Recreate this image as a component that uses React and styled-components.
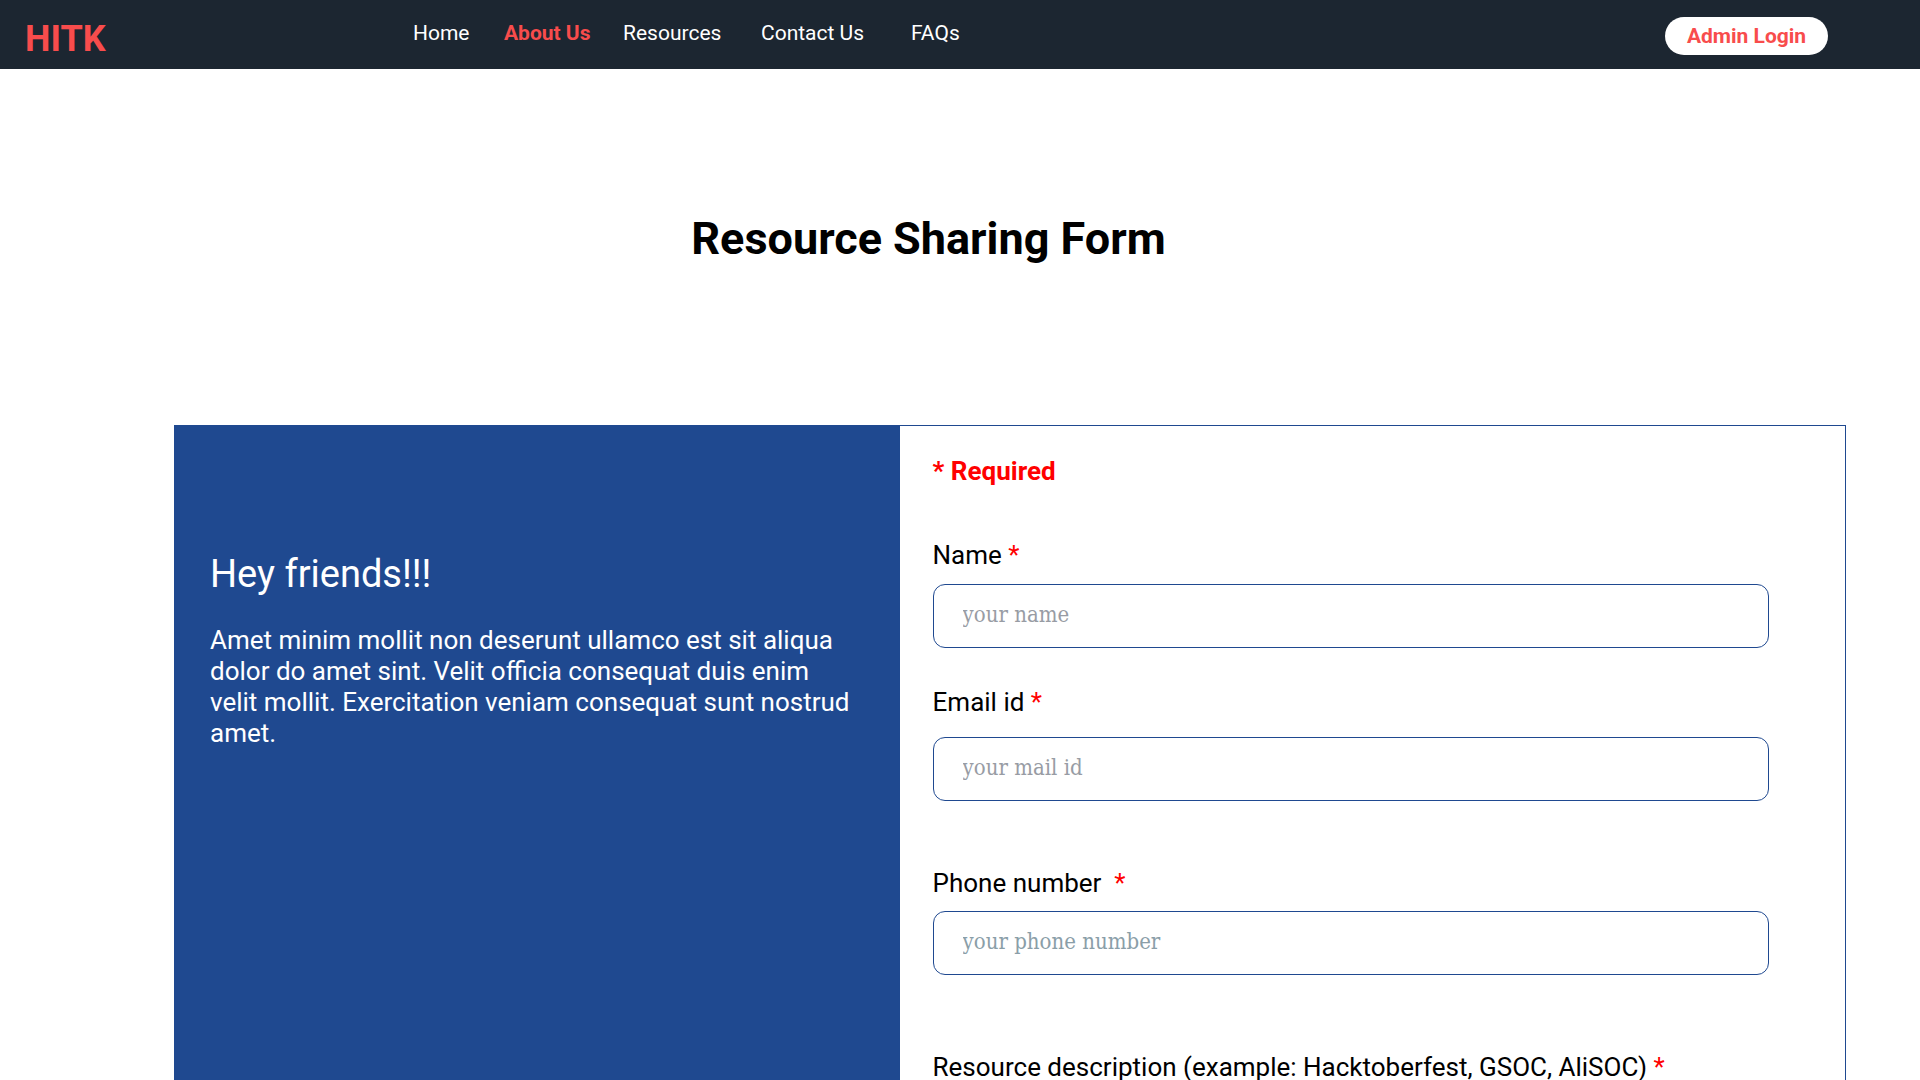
import React from "react";
import styled, { createGlobalStyle } from "styled-components";

const GlobalStyle = createGlobalStyle`
  *, *::before, *::after { box-sizing: border-box; }
  html { scrollbar-width: none; }
  body {
    margin: 0;
    background: #ffffff;
    color: #000000;
    font-family: Roboto, "Liberation Sans", sans-serif;
  }
`;

const Header = styled.header`
  display: flex;
  align-items: flex-start;
  height: 69px;
  padding: 0 92px 0 25px;
  background: #1c2631;
`;

const Logo = styled.a`
  width: 388px;
  padding-top: 18px;
  color: #f84c4c;
  font-size: 36px;
  font-weight: 700;
  line-height: 42px;
  text-decoration: none;
`;

const Nav = styled.nav`
  display: grid;
  grid-template-columns: 91px 119px 138px 150px auto;
  padding-top: 20px;
`;

const NavLink = styled.a`
  color: ${({ $active }) => ($active ? "#f84c4c" : "#ffffff")};
  font-size: 21px;
  font-weight: ${({ $active }) => ($active ? 700 : 400)};
  line-height: 26px;
  text-decoration: none;
  white-space: nowrap;
`;

const LoginButton = styled.button`
  width: 163px;
  height: 38px;
  margin: 17px 0 0 auto;
  padding: 0;
  border: 0;
  border-radius: 19px;
  background: #ffffff;
  color: #f84c4c;
  font: 700 21px/38px Roboto, "Liberation Sans", sans-serif;
  cursor: pointer;
`;

const Title = styled.h1`
  margin: 0;
  padding: 143px 63px 159px 0;
  font-size: 45px;
  font-weight: 700;
  line-height: 54px;
  text-align: center;
`;

const Card = styled.main`
  display: grid;
  grid-template-columns: 726fr 946fr;
  margin: 0 74px 0 174px;
  border: 1px solid #1f4990;
  border-left: 0;
`;

const Intro = styled.section`
  padding: 125px 40px 0 36px;
  background: #1f4990;
  color: #ffffff;
`;

const IntroTitle = styled.h2`
  margin: 0 0 28px;
  font-size: 38px;
  font-weight: 400;
  line-height: 46px;
`;

const IntroText = styled.p`
  margin: 0;
  font-size: 26px;
  line-height: 31px;
`;

const Form = styled.form`
  padding: 30px 76px 60px 33px;
`;

const RequiredNote = styled.p`
  margin: 0 0 53px;
  color: #ff0000;
  font-size: 26px;
  font-weight: 700;
  line-height: 31px;
`;

const Field = styled.div`
  display: flex;
  flex-direction: column;
  gap: ${({ $gap }) => $gap}px;
  margin-bottom: ${({ $after }) => $after}px;
`;

const Label = styled.label`
  font-size: 26px;
  line-height: 31px;
  white-space: pre-wrap;
`;

const Star = styled.span`
  color: #ff0000;
`;

const Input = styled.input`
  width: 100%;
  height: 64px;
  padding: 0 29px 4px;
  border: 1px solid #1f4990;
  border-radius: 12px;
  background: #ffffff;
  color: #000000;
  font-family: "DejaVu Serif Condensed", "DejaVu Serif", serif;
  font-size: 22px;
  outline: none;

  &::placeholder {
    color: ${({ $tone }) => $tone};
    opacity: 1;
  }
`;

const TextArea = styled(Input).attrs({ as: "textarea" })`
  height: 160px;
  padding: 18px 29px;
  resize: vertical;
`;

const links = ["Home", "About Us", "Resources", "Contact Us", "FAQs"];

const fields = [
  { id: "name", label: "Name ", hint: "your name", type: "text", gap: 13, after: 39, tone: "#989ca4" },
  { id: "email", label: "Email id ", hint: "your mail id", type: "email", gap: 19, after: 67, tone: "#989ca4" },
  { id: "phone", label: "Phone number  ", hint: "your phone number", type: "tel", gap: 12, after: 77, tone: "#8a9ea8" },
];

export default function App() {
  return (
    <>
      <GlobalStyle />
      <Header>
        <Logo href="#home">HITK</Logo>
        <Nav>
          {links.map((text) => (
            <NavLink key={text} href="#" $active={text === "About Us"}>
              {text}
            </NavLink>
          ))}
        </Nav>
        <LoginButton type="button">Admin Login</LoginButton>
      </Header>
      <Title>Resource Sharing Form</Title>
      <Card>
        <Intro>
          <IntroTitle>Hey friends!!!</IntroTitle>
          <IntroText>
            Amet minim mollit non deserunt ullamco est sit aliqua dolor do amet sint. Velit officia
            consequat duis enim velit mollit. Exercitation veniam consequat sunt nostrud amet.
          </IntroText>
        </Intro>
        <Form>
          <RequiredNote>* Required</RequiredNote>
          {fields.map((f) => (
            <Field key={f.id} $gap={f.gap} $after={f.after}>
              <Label htmlFor={f.id}>
                {f.label}
                <Star>*</Star>
              </Label>
              <Input id={f.id} type={f.type} placeholder={f.hint} $tone={f.tone} />
            </Field>
          ))}
          <Field $gap={13} $after={0}>
            <Label htmlFor="description">
              {"Resource description (example: Hacktoberfest, GSOC, AliSOC) "}
              <Star>*</Star>
            </Label>
            <TextArea id="description" />
          </Field>
        </Form>
      </Card>
    </>
  );
}
